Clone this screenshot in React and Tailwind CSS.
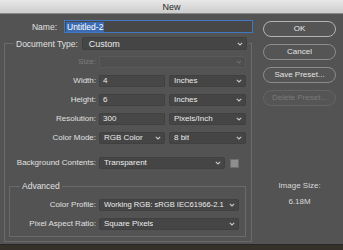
import React from "react";

function Chevron({ dim }) {
  return (
    <svg width="6" height="4" viewBox="0 0 6 4" className="shrink-0">
      <path
        d="M0.8 0.8 L3 3 L5.2 0.8"
        fill="none"
        stroke={dim ? "#6c6c6c" : "#c8c8c8"}
        strokeWidth="1.1"
      />
    </svg>
  );
}

function Select({ value, width, disabled, small }) {
  return (
    <div
      style={{ width }}
      className={
        "flex h-[12px] items-center justify-between overflow-hidden rounded-[2px] border pl-[4px] pr-[3px] " +
        (disabled
          ? "border-[#5a5a5a] bg-[#4f4f4f]"
          : "border-[#404040] bg-[#454545] text-[#ececec]")
      }
    >
      <span className={"overflow-hidden " + (small ? "text-[7.6px]" : "")}>{value}</span>
      <Chevron dim={disabled} />
    </div>
  );
}

function Field({ value, width }) {
  return (
    <div
      style={{ width }}
      className="flex h-[12px] items-center rounded-[1px] border border-[#404040] bg-[#474747] px-[3px] text-[#ececec]"
    >
      {value}
    </div>
  );
}

function Row({ label, labelW, disabled, children, className = "" }) {
  return (
    <div className={"flex items-center " + className}>
      <div
        style={{ width: labelW }}
        className={"pr-[3px] text-right " + (disabled ? "text-[#7c7c7c]" : "text-[#e0e0e0]")}
      >
        {label}
      </div>
      {children}
    </div>
  );
}

function Btn({ children, kind }) {
  const cls =
    kind === "ok"
      ? "border-[#b4b4b4] text-[#ececec]"
      : kind === "off"
      ? "border-[#646464] text-[#7a7a7a]"
      : "border-[#8c8c8c] text-[#e4e4e4]";
  return (
    <div
      className={
        "flex h-[16px] w-[73px] items-center justify-center rounded-full border-[1.5px] bg-[#555555] " +
        cls
      }
    >
      {children}
    </div>
  );
}

export default function App() {
  return (
    <div
      className="flex h-[250px] w-[343px] flex-col overflow-hidden whitespace-nowrap bg-[#35302a] text-[8px] leading-[10px]"
      style={{ fontFamily: '"Liberation Sans", Arial, sans-serif' }}
    >
      <div className="flex h-[14px] shrink-0 items-center justify-center border-b border-[#8a8a8a] bg-gradient-to-b from-[#e8e8e8] to-[#cdcdcd] text-[9px] text-[#262626]">
        New
      </div>

      <div className="flex h-[231px] shrink-0 border-b border-[#262626] bg-[#535353]">
        {/* left column */}
        <div className="w-[255px] pl-[4px] pt-[6px]">
          <div className="flex items-center">
            <div className="w-[56px] pr-[3px] text-right text-[8.5px] text-[#e0e0e0]">Name:</div>
            <div className="ml-[4px] flex h-[13px] w-[189px] items-center border border-[#4277c4] bg-[#474747] pl-[1px]">
              <span className="bg-[#3b6cb3] px-[1px] text-[8.5px] text-white">Untitled-2</span>
            </div>
          </div>

          <fieldset className="mt-[4px] w-[248px] border border-[#6a6a6a] pb-[4px]">
            <legend className="ml-[9px] flex w-[235px] items-center px-[2px]">
              <span className="text-[8.5px] text-[#e0e0e0]">Document Type:</span>
              <div className="ml-[4px] flex h-[13px] w-[169px] items-center justify-between rounded-[2px] border border-[#404040] bg-[#454545] pl-[6px] pr-[3px] text-[9px] text-[#ececec]">
                <span>Custom</span>
                <Chevron />
              </div>
            </legend>

            <div className="flex flex-col gap-[7px] pt-[6px]">
              <Row label="Size:" labelW={94} disabled>
                <Select value="" width={147} disabled />
              </Row>
              <Row label="Width:" labelW={94}>
                <Field value="4" width={66} />
                <div className="ml-[4px]">
                  <Select value="Inches" width={77} />
                </div>
              </Row>
              <Row label="Height:" labelW={94}>
                <Field value="6" width={66} />
                <div className="ml-[4px]">
                  <Select value="Inches" width={77} />
                </div>
              </Row>
              <Row label="Resolution:" labelW={94}>
                <Field value="300" width={66} />
                <div className="ml-[4px]">
                  <Select value="Pixels/Inch" width={77} />
                </div>
              </Row>
              <Row label="Color Mode:" labelW={94}>
                <Select value="RGB Color" width={66} />
                <div className="ml-[4px]">
                  <Select value="8 bit" width={77} />
                </div>
              </Row>
            </div>

            <Row label="Background Contents:" labelW={94} className="mt-[13px]">
              <Select value="Transparent" width={126} />
              <div className="ml-[5px] h-[9px] w-[9px] border border-[#6e6e6e] bg-[#8e8e8e]" />
            </Row>

            <fieldset className="ml-[4px] mt-[12px] w-[237px] border border-[#6a6a6a] pb-[6px]">
              <legend className="ml-[10px] px-[2px] text-[8.5px] text-[#e0e0e0]">Advanced</legend>
              <div className="flex flex-col gap-[7px] pt-[8px]">
                <Row label="Color Profile:" labelW={89}>
                  <Select value="Working RGB:  sRGB IEC61966-2.1" width={140} small />
                </Row>
                <Row label="Pixel Aspect Ratio:" labelW={89}>
                  <Select value="Square Pixels" width={140} />
                </Row>
              </div>
            </fieldset>
          </fieldset>
        </div>

        {/* right column */}
        <div className="ml-[8px] flex w-[73px] flex-col pt-[7px]">
          <div className="flex flex-col gap-[7px]">
            <Btn kind="ok">OK</Btn>
            <Btn>Cancel</Btn>
            <Btn>Save Preset...</Btn>
            <Btn kind="off">Delete Preset...</Btn>
          </div>
          <div className="mt-[75px] flex flex-col items-center gap-[6px] text-[#d8d8d8]">
            <span>Image Size:</span>
            <span>6.18M</span>
          </div>
        </div>
      </div>
    </div>
  );
}
